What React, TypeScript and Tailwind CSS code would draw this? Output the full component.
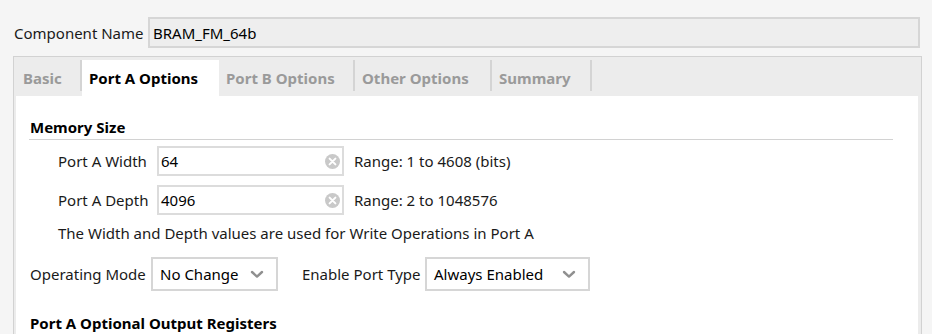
import React from "react";

const ClearIcon = () => (
  <svg width="15" height="15" viewBox="0 0 15 15">
    <circle cx="7.5" cy="7.5" r="7.5" fill="#c9c9c9" />
    <path d="M4.6 4.6 L10.4 10.4 M10.4 4.6 L4.6 10.4" stroke="#ffffff" strokeWidth="2" strokeLinecap="round" />
  </svg>
);

const Chevron = () => (
  <svg width="14" height="9" viewBox="0 0 14 9">
    <polyline points="2,2 7,6.6 12,2" fill="none" stroke="#909090" strokeWidth="2.4" strokeLinecap="round" strokeLinejoin="round" />
  </svg>
);

const NumField = ({ label, value, range }: { label: string; value: string; range: string }) => (
  <div className="flex items-center h-[30px]">
    <div className="w-[99px] ml-[28px]">{label}</div>
    <div className="w-[187px] h-[30px] border-2 border-[#dcdcdc] bg-white flex items-center pl-[2px] pr-[2px]">
      <span className="flex-1 text-black">{value}</span>
      <ClearIcon />
    </div>
    <div className="ml-[10px]">{range}</div>
  </div>
);

const Select = ({ value, width }: { value: string; width: string }) => (
  <div className={`${width} h-[34px] border-2 border-[#d6d6d6] bg-white flex items-center pl-[7px] pr-[12px]`}>
    <span className="flex-1 text-black">{value}</span>
    <Chevron />
  </div>
);

export default function App() {
  const tabs = [
    { name: "Basic", w: "w-[66px]", active: false },
    { name: "Port A Options", w: "w-[137px]", active: true },
    { name: "Port B Options", w: "w-[136px]", active: false },
    { name: "Other Options", w: "w-[137px]", active: false },
    { name: "Summary", w: "w-[100px]", active: false },
  ];
  return (
    <div
      className="w-[932px] h-[334px] overflow-hidden bg-[#f5f5f5] text-[15px] leading-[20px] text-[#1a1a1a]"
      style={{ fontFamily: '"Noto Sans", "Open Sans", sans-serif' }}
    >
      <div className="pt-[17px] pl-[14px] flex items-center">
        <div className="w-[134px]">Component Name</div>
        <div className="w-[772px] h-[31px] border-2 border-[#d6d6d6] bg-[#eeeeee] flex items-center pl-[3px] text-black">
          BRAM_FM_64b
        </div>
      </div>
      <div className="ml-[13px] mt-[8px] w-[909px] h-[300px] border border-[#d2d2d2] bg-[#ececec] pt-[3px] pl-[2px] pr-[3px] flex flex-col">
        <div className="flex h-[36px] shrink-0">
          {tabs.map((t) =>
            t.active ? (
              <div key={t.name} className={`${t.w} bg-white font-bold text-black pl-[7px] flex items-center`}>
                {t.name}
              </div>
            ) : (
              <div key={t.name} className={`${t.w} font-bold text-[#9a9a9a] pl-[7px] flex items-center`}>
                <div className="flex-1">{t.name}</div>
                <div className="w-[2px] h-[31px] self-start bg-[#d4d4d4]" />
              </div>
            )
          )}
        </div>
        <div className="flex-1 bg-white pl-[13px]">
          <div className="w-[864px] pl-[1px] pt-[21px] pb-[2px] border-b border-[#d2d2d2] font-bold text-black">Memory Size</div>
          <div className="mt-[6px] flex flex-col gap-[9px] pl-[1px]">
            <NumField label="Port A Width" value="64" range="Range: 1 to 4608 (bits)" />
            <NumField label="Port A Depth" value="4096" range="Range: 2 to 1048576" />
          </div>
          <div className="mt-[8px] ml-[29px]">The Width and Depth values are used for Write Operations in Port A</div>
          <div className="mt-[14px] flex items-center pl-[1px]">
            <div className="w-[121px]">Operating Mode</div>
            <Select value="No Change" width="w-[127px]" />
            <div className="ml-[24px] w-[123px]">Enable Port Type</div>
            <Select value="Always Enabled" width="w-[165px]" />
          </div>
          <div className="mt-[22px] pl-[1px] font-bold text-black">Port A Optional Output Registers</div>
        </div>
      </div>
    </div>
  );
}
